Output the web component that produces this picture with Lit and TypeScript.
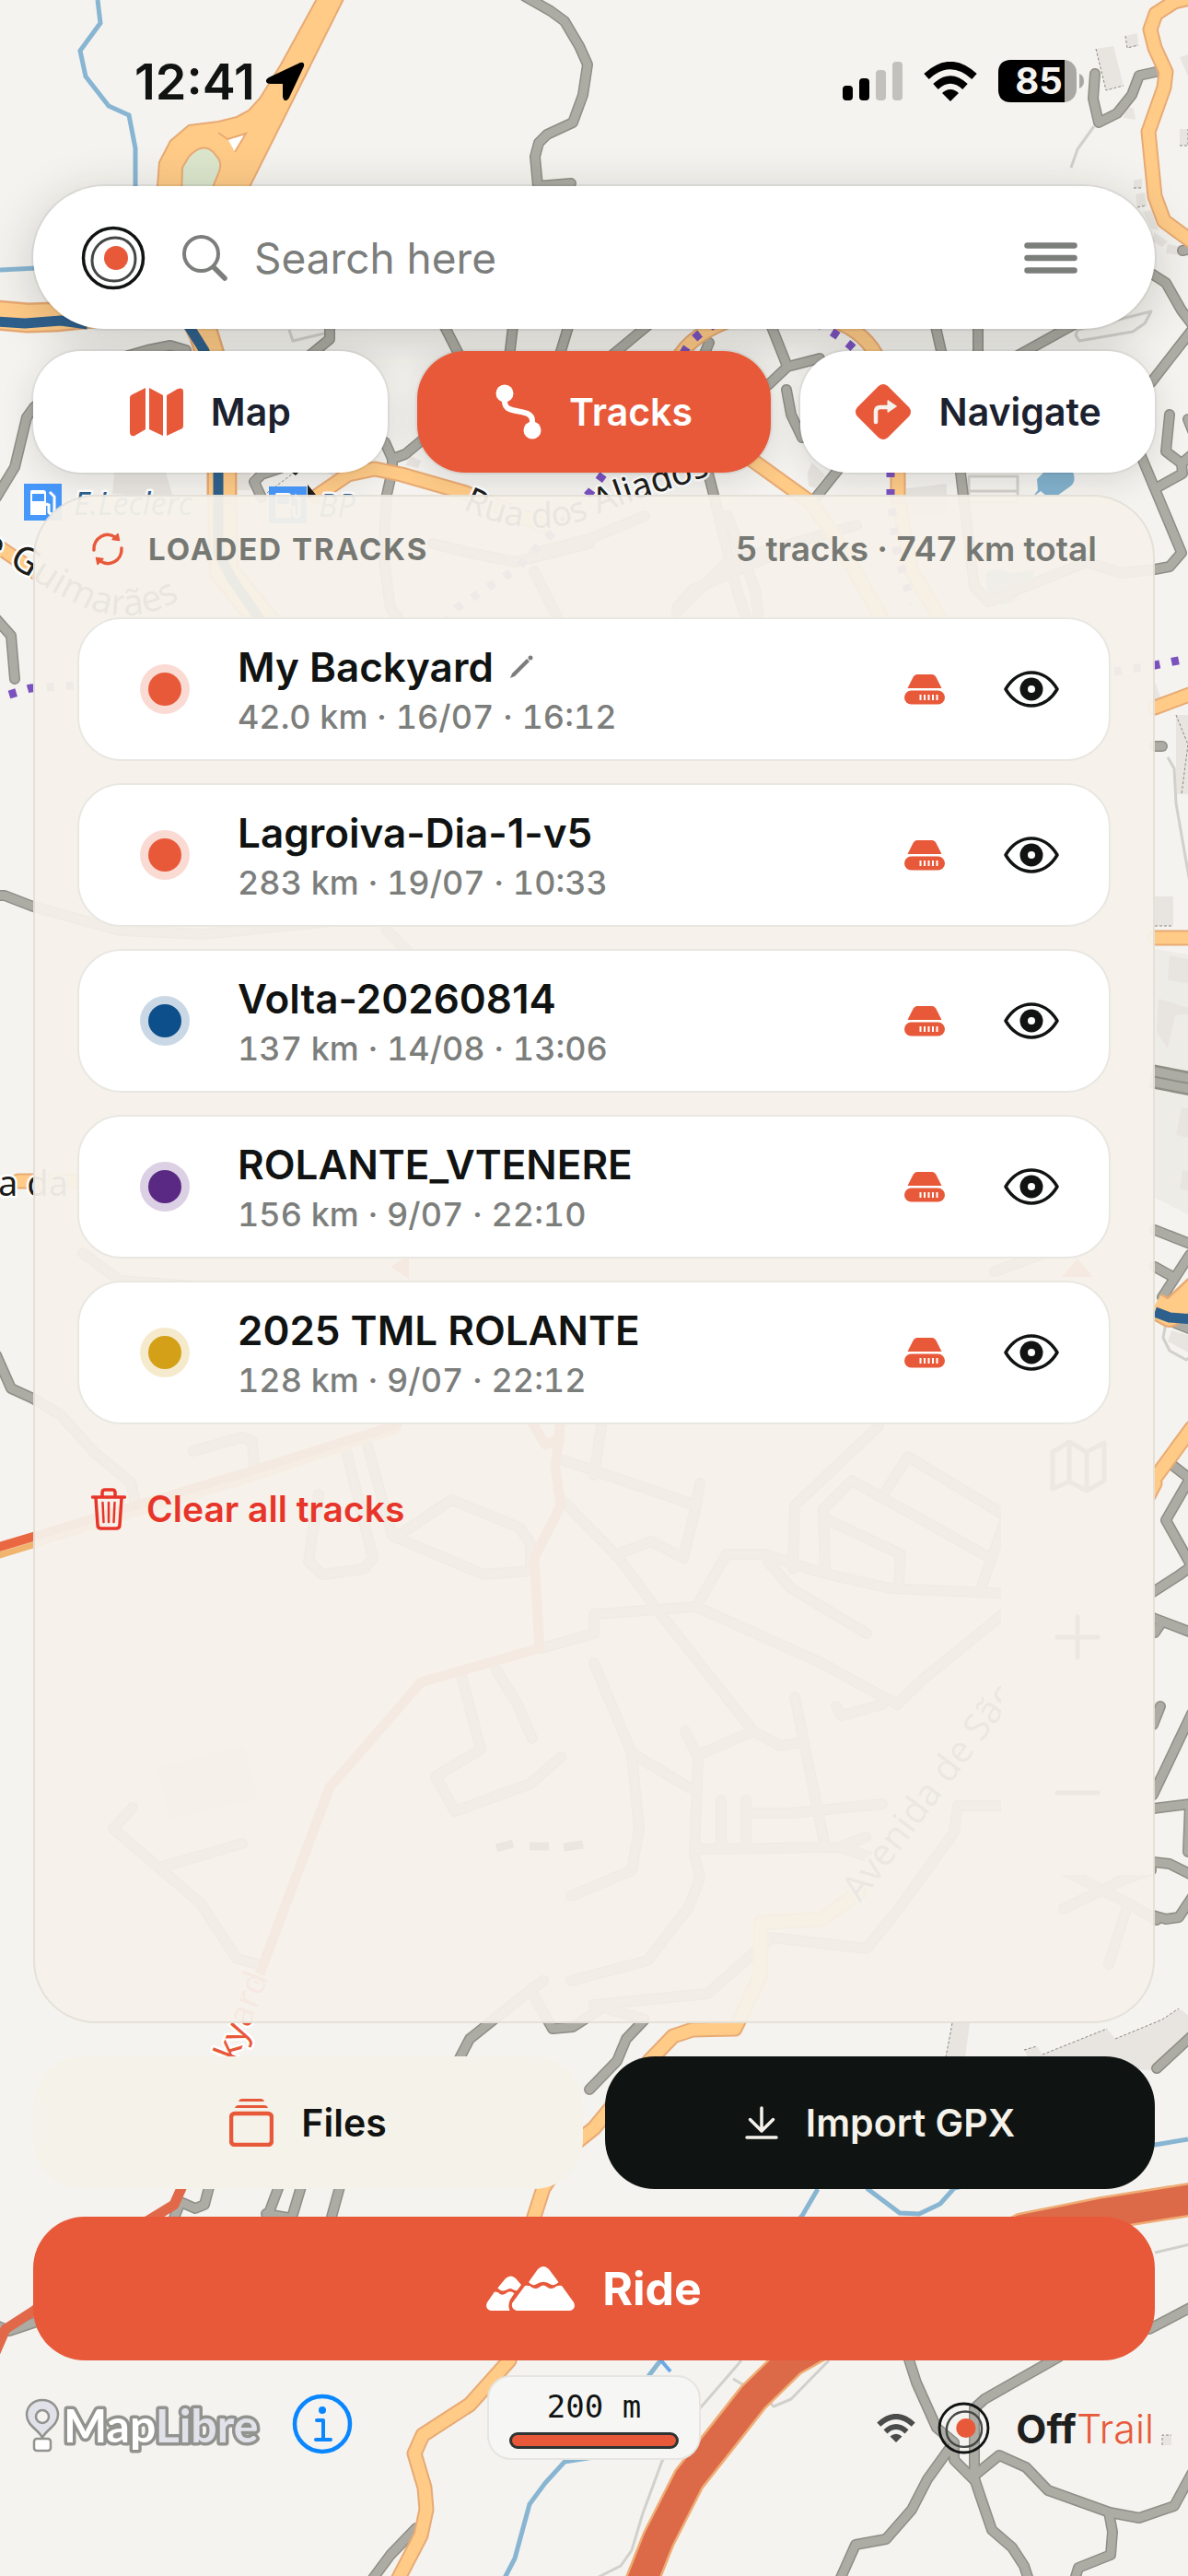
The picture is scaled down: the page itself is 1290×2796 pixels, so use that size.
import { LitElement, html, svg, css } from "lit";
import { customElement, property, state } from "lit/decorators.js";

interface Track {
  name: string;
  meta: string;
  color: string;
  editable?: boolean;
}

/* ---------- Map geometry ---------- */

const STREAMS = [
  "M106 0L109 25L87 55L93 83L118 115L140 125L147 161V210",
  "M0 293L40 291",
  "M1290 2322L1254 2328L1036 2375L1021 2392L998 2403L977 2402L941 2375",
  "M888 2376L871 2405L715 2565L705 2578L645 2667L613 2672L592 2695L575 2718L559 2777L547 2800",
];

const THIN = [
  "M1188 137L1170 162L1163 182",
  "M1268 822L1275 834L1277 872L1292 958",
  "M805 2562L793 2576L760 2614L719 2671L698 2728L686 2768L674 2785L650 2797",
  "M900 2562L859 2604L840 2612L830 2602L796 2582",
  "M1254 2445L1292 2436",
  "M1250 338L1170 358L1168 364L1172 370L1230 360L1243 351Z",
  "M1052 517H1105V545H1052Z M1052 533H1105",
  "M314 358L318 370L356 361",
  "M1266 1436L1263 1452L1270 1466L1288 1476L1296 1470",
];

const GREY = [
  "M570 -4L598 12L613 23L629 50L638 70L633 103L622 133L594 146L585 155L581 170L584 202L620 199",
  "M1189 80L1187 107L1193 133L1213 123L1229 103L1237 82L1260 77",
  "M1296 270L1284 272",
  "M1252 298L1266 307L1283 337L1296 354",
  "M1250 415L1296 356",
  "M1270 450L1266 490L1283 503L1296 492M1290 455L1296 470M1283 503L1284 514L1255 530",
  "M1237 490L1283 600L1270 615L1254 618L1217 622L1180 610L1073 653L1058 637L1042 505L1022 381L1015 350",
  "M-4 540L16 507L29 453L37 442L90 400L160 380L185 375L202 380",
  "M358 345V368L335 387",
  "M478 345L500 388M558 345L553 388M620 345L607 388",
  "M418 480L426 498L440 493L458 478M426 498V510L420 537L416 600L424 660L470 720",
  "M284 540L276 523L284 515L305 508",
  "M664 386L705 352M764 386L770 372",
  "M834 345L855 398L890 389M855 398L834 418",
  "M854 423L859 450L871 475",
  "M1062 345V390M1170 350L1105 386",
  "M910 510L886 540M768 510L775 537L800 640L820 700",
  "M735 660L752 640L845 600M790 560L820 640L825 680M735 664L790 610L930 570",
  "M580 600L640 585L700 560M470 590L510 600L560 610L640 590M580 620L610 680",
  "M-4 672L12 690L16 737",
  "M-4 972H5L36 984L130 1010L220 1014L360 1000",
  "M-4 1471L12 1507L36 1518L66 1536L103 1577L142 1609L148 1634",
  "M1254 810H1262",
  "M1254 1335L1292 1350M1254 1375L1272 1385M1262 1408L1292 1362M1276 1436L1296 1444",
  "M1274 1591L1292 1605L1266 1650L1294 1700L1280 1710L1252 1728",
  "M1252 1756L1294 1772M1254 1772L1262 1760",
  "M1260 1852L1252 1872M1294 1860L1252 1948M1252 1963L1292 1958L1290 2010",
  "M1252 2021L1270 2023L1294 2035M1252 2079L1266 2083L1280 2081L1294 2060",
  "M210 1575L263 1560L274 1565L276 1593",
  "M376 1575L405 1691L395 1703L350 1709L335 1695L346 1622",
  "M399 1569L426 1667L525 1709L576 1705",
  "M432 1667L490 1628L564 1658L576 1675V1703",
  "M612 1585L756 1634L742 1691L707 1673L670 1687M760 1610L756 1634M653 1548L645 1601",
  "M612 1630L672 1691L711 1744L818 1879L847 1895L871 1891M818 1879L758 1905",
  "M502 1822L522 1899L473 1928L494 1966L576 1936L609 1907",
  "M539 1813L562 1850L578 1887",
  "M588 1789L645 1773V1752L756 1744L789 1687L830 1687L892 1707L966 1724L1102 1730",
  "M756 1744L892 1805L974 1850L1003 1822L1089 1752",
  "M954 1548L863 1634L861 1703M896 1707L894 1638L925 1607L1075 1691",
  "M900 1650L978 1687L976 1720M962 1618L986 1581L1093 1646L1065 1724",
  "M834 1695L859 1724L941 1773M863 1842L896 2005M908 1852L914 1862L958 1850",
  "M744 1879L758 1907L754 2013L760 2038L748 2070L703 2128L620 2150",
  "M645 1805L686 1903L748 1940M686 1903L694 1985L686 2030L620 2058",
  "M783 1954V2007M810 1954V2007M756 2007L912 2005L949 2017M810 1968H859L958 1958M912 2005L940 1994",
  "M645 2176L768 2164L838 2103L941 2115L974 2074L1036 1989L1040 1960L1087 1960",
  "M144 1962L123 1985L218 2066L257 2126L280 2132M177 2026L263 2001",
  "M1204 2132L1225 2066L1155 2030M1155 2072L1220 2040L1250 2030M1225 2066L1256 2084",
  "M645 2176L700 2192L680 2213L670 2237L640 2268",
  "M590 2150L576 2160L510 2213L498 2236M576 2160L600 2202L622 2200L650 2182",
  "M1294 2210L1256 2245",
  "M228 2370L222 2393L212 2397L196 2390L188 2410",
  "M304 2370L289 2410M328 2370L316 2410M289 2403L318 2408M370 2370L359 2410",
  "M40 2520L10 2530L-4 2524",
  "M452 2744L424 2773L404 2800",
  "M986 2558L995 2586L1017 2635L1036 2651V2670L1058 2692",
  "M1150 2558L1069 2604L1058 2614V2690L1064 2708L1077 2746L1099 2765L1112 2785L1117 2800",
  "M1030 2659L1007 2691L990 2724L962 2756L929 2762L912 2800",
  "M1058 2687L1085 2665L1114 2678L1138 2703L1205 2727L1237 2733L1275 2720L1294 2685",
  "M1204 2727L1208 2748L1206 2773L1171 2787L1167 2800",
  "M1248 2528L1294 2504",
  "M90 1360L130 1390L270 1400M420 1010L470 1060M1080 1380L1190 1340",
];

const ORANGE = [
  "M1300 -4L1275 2L1255 15L1249 32L1254 52L1266 78L1264 95L1247 143L1254 213L1264 240L1294 262",
  "M343 539L378 515L407 509L436 515L506 535L590 570",
  "M738 386Q755 360 800 345",
  "M895 345Q935 355 952 386L975 440V540L990 620L1020 670",
  "M812 496L880 545L905 580L957 670",
  "M-4 592L40 622",
  "M1254 768L1294 753M1254 1018H1294",
  "M1250 1610L1294 1550M1215 1685L1254 1610",
  "M933 2054L892 2083L826 2087V2144L798 2202L752 2203L731 2210L705 2237L645 2310L620 2330L590 2375L580 2406L553 2562L510 2610L459 2643L450 2663L461 2700L463 2724L457 2752L432 2800",
  "M20 1282H85",
];

const PURPLE = [
  "M742 384Q750 365 780 350",
  "M885 350Q915 365 935 386",
  "M967 510V540L974 600L990 655",
  "M655 515L642 533L607 571L560 618L496 660L470 690",
  "M10 754L33 747L80 744",
  "M1210 729L1254 722L1294 714",
];

const BUILDINGS = [
  "M1190 53L1209 50L1220 93L1201 98Z",
  "M1222 39L1235 36L1236 50L1224 52Z",
  "M1222 115L1231 118L1233 130L1220 128ZM1281 62L1294 58V92ZM1281 140H1294V158H1281Z",
  "M1231 196L1240 194V204H1231ZM1233 211L1243 209L1245 223L1235 225ZM1241 230L1250 228L1258 250L1250 248ZM1253 252L1268 262L1262 268L1252 262ZM1268 265L1284 268L1282 277L1266 275Z",
  "M877 513L882 502L896 516L885 530L878 527Z",
  "M984 530L1028 525V560H984Z",
  "M124 513H180L188 540L122 536ZM258 513H272V532H258Z",
  "M350 510L362 517L372 509ZM440 505L446 495L457 500L454 508Z",
  "M1254 740L1262 762L1254 768ZM1277 776H1294V862H1277ZM1254 973H1274V1005H1254Z",
  "M1270 1037L1294 1042V1068L1268 1064ZM1258 1084L1294 1095V1100L1276 1102L1268 1138L1256 1120ZM1283 1202L1294 1204V1236L1277 1232ZM1284 1270L1294 1272V1294L1281 1290Z",
  "M1272 1444L1294 1450V1470L1268 1456Z",
  "M1034 2196H1053L1048 2233H1027Z",
  "M1112 2225L1126 2221L1132 2230L1202 2202L1211 2213L1262 2192L1280 2180L1294 2190V2208L1250 2247L1120 2240Z",
  "M1262 2643H1272V2654H1262Z",
  "M170 1918L265 1895L280 1952L185 1975Z",
];

const mapView = svg`
  <rect width="1290" height="2796" fill="#f4f3ef"/>
  <path d="M1254 1030L1290 1036V1318L1254 1300Z" fill="#edece7"/>
  <g fill="#e8e5e1">${BUILDINGS.map((d) => svg`<path d=${d}/>`)}</g>
  <g fill="none" stroke="#8b8984" stroke-width="1" stroke-dasharray="3 2">
    <path d="M1190 53L1201 98L1220 93M1222 39L1224 52L1236 49M1231 204H1240M1235 225L1245 223M1277 776L1290 808L1283 862M1254 1005H1274M1112 2225L1126 2221M1132 2230L1202 2202M1211 2213L1262 2192L1280 2180M1034 2196L1027 2233M1262 2654V2643H1272M1281 158H1290V140M290 535L318 514"/>
  </g>
  <g fill="none" stroke="#d1d0cb" stroke-width="3" stroke-linejoin="round">${THIN.map((d) => svg`<path d=${d}/>`)}</g>
  <g fill="none" stroke="#87b5d2" stroke-width="5">${STREAMS.map((d) => svg`<path d=${d}/>`)}</g>
  <path d="M1121 540L1127 532L1126 520L1136 510H1164Q1170 522 1162 528L1148 538H1136L1130 533Z" fill="#82b1cd"/>
  <path d="M1070 622Q1084 614 1098 622L1124 618L1118 636L1098 654Q1080 662 1072 646Z" fill="#87b5d2"/>
  <g fill="none" stroke-linejoin="round" stroke-linecap="round">
    <g stroke="#8e8e86" stroke-width="12">${GREY.map((d) => svg`<path d=${d}/>`)}</g>
    <path d="M1250 1168L1296 1177" stroke="#8e8e86" stroke-width="26" stroke-linecap="butt"/>
    <g stroke="#acaca5" stroke-width="9">${GREY.map((d) => svg`<path d=${d}/>`)}</g>
    <path d="M1250 1168L1296 1177" stroke="#acaca5" stroke-width="21" stroke-linecap="butt"/>
    <path d="M1250 1168L1296 1177" stroke="#8e8e86" stroke-width="2" stroke-linecap="butt"/>
    <g stroke="#e8aa74" stroke-width="17">${ORANGE.map((d) => svg`<path d=${d}/>`)}</g>
    <path d="M-4 342L30 345L60 344L120 338L210 340L221 362L228 385L241 513V540L243 620L300 690" stroke="#e8aa74" stroke-width="33"/>
    <path d="M1254 1417L1270 1426L1300 1398" stroke="#e8aa74" stroke-width="30" stroke-linecap="butt"/>
    <g stroke="#ffcb87" stroke-width="13">${ORANGE.map((d) => svg`<path d=${d}/>`)}</g>
    <path d="M-4 342L30 345L60 344L120 338L210 340L221 362L228 385L241 513V540L243 620L300 690" stroke="#ffcb87" stroke-width="28"/>
    <path d="M1254 1417L1270 1426L1300 1398" stroke="#ffcb87" stroke-width="25" stroke-linecap="butt"/>
    <g stroke="#2e608d" stroke-width="11" stroke-linecap="butt">
      <path d="M-4 349L27 351L66 348L95 352M190 335L207 357L222 381L234 450L237 513V600L251 627L282 672"/>
      <path d="M1254 1424L1270 1430L1296 1432"/>
    </g>
    <g stroke="#7a51bf" stroke-width="9" stroke-dasharray="8 13" stroke-linecap="butt">${PURPLE.map((d) => svg`<path d=${d}/>`)}</g>
    <path d="M-4 1689L36 1677L148 1643L271 1606L432 1552" stroke="#f0b46f" stroke-width="7"/>
    <path d="M-4 1680L36 1668L148 1634L271 1597L432 1546" stroke="#ea6841" stroke-width="10"/>
    <path d="M575 1540L592 1568L608 1562M609 1540L603 1593L609 1634L580 1691L586 1789L457 1826L358 1940L280 2148M205 2350L197 2375L189 2393L158 2412L37 2508L6 2528L-8 2560" stroke="#e2684a" stroke-width="11"/>
    <path d="M1320 2383L1200 2402L1110 2420L859 2562L818 2602L789 2639L748 2691L715 2756L696 2804" stroke="#efac74" stroke-width="37"/>
    <path d="M1320 2383L1200 2402L1110 2420L859 2562L818 2602L789 2639L748 2691L715 2756L696 2804" stroke="#dc6a49" stroke-width="32"/>
  </g>
  <path d="M345 -3L305 70L282 107L270 120L257 127L237 132L205 136L185 153L173 176L170 215H265L374 -3Z" fill="#ffcb87" stroke="#e8aa74" stroke-width="2"/>
  <path d="M197 215L198 182L205 170Q222 152 234 168Q242 176 238 186L230 206V215Z" fill="#dbe6cd" stroke="#e8aa74" stroke-width="2"/>
  <path d="M248 152L267 145L255 165Z" fill="#fff"/>
  <path d="M237 144L247 151L267 145L255 165" fill="none" stroke="#e8aa74" stroke-width="2"/>
  <path d="M539 2006L557 2001M575 2004H596M612 2005L633 2002" stroke="#333" stroke-width="9"/>
  <path d="M424 1375L444 1362V1388Z M1153 1386L1170 1366L1187 1386Z" fill="#e8593a"/>
  <path d="M334 526L343 537L334 541ZM317 513L325 512L321 516Z" fill="#1d1d1b"/>
  <g>
    <rect x="26" y="525" width="41" height="40" fill="#4798fb"/>
    <rect x="292" y="528" width="41" height="40" fill="#4798fb"/>
    ${[26, 292].map(
      (x, i) => svg`<g transform="translate(${x} ${525 + i * 3})" fill="#fff">
        <path d="M8 7H21Q24 7 24 10V34H7V10Q7 7 8 7Z"/><path d="M9 11H22V19H9Z" fill="#4798fb"/>
        <path d="M28 9L33 14V31Q30 35 27 31V23L24 22" fill="none" stroke="#fff" stroke-width="3"/></g>`
    )}
  </g>
  <g class="map-text" stroke="#fff" stroke-width="5" paint-order="stroke" stroke-linejoin="round">
    <text x="80" y="559" font-size="34" font-style="italic" fill="#2e608d">E.Leclerc</text>
    <text x="346" y="561" font-size="34" font-style="italic" fill="#2e608d">BP</text>
    <path id="aliados" d="M502 552C545 575 600 580 640 562C690 540 730 532 800 505" fill="none" stroke="none"/>
    <text font-size="38" fill="#1c1c1a"><textPath href="#aliados">Rua dos Aliados</textPath></text>
    <path id="guimaraes" d="M-22 600C14 610 40 636 80 654C125 676 165 672 206 644" fill="none" stroke="none"/>
    <text font-size="40" fill="#1c1c1a"><textPath href="#guimaraes">e Guimarães</textPath></text>
    <text x="74" y="1298" font-size="38" text-anchor="end" fill="#1c1c1a">Rua da</text>
    <text transform="translate(292 2146) rotate(-69)" font-size="38" text-anchor="end" fill="#e8593a">My Backyard</text>
    <text transform="translate(934 2066) rotate(-53)" font-size="40" fill="#444">Avenida de São</text>
  </g>
  <path d="M716 2560L728 2574" stroke="#6aa8ea" stroke-width="4"/>
  <rect x="1087" y="1520" width="166" height="515" fill="#f4f3ef"/>
  <g fill="none" stroke="#555" stroke-width="5" stroke-linejoin="round" stroke-linecap="round">
    <path d="M1143 1576L1161 1565L1180 1576L1199 1566V1607L1180 1618L1161 1608L1143 1616ZM1161 1565V1608M1180 1576V1618"/>
    <path d="M1170 1755V1799M1148 1777H1192M1148 1946H1192"/>
  </g>
`;

/* ---------- Icons ---------- */

const targetIcon = (size: number) => html`<svg class="icon" width=${size} height=${size} viewBox="0 0 70 70" aria-hidden="true">
  <circle cx="35" cy="35" r="32.5" fill="none" stroke="#101312" stroke-width="3.5"/>
  <path d="M37 13C51 13 59 24 59 36C59 50 49 60 36 60C22 60 12 51 12 38C12 24 23 13 37 13Z" fill="none" stroke="#444745" stroke-width="3"/>
  <circle cx="38" cy="35" r="13" fill="#e8593a"/>
</svg>`;

const wifiIcon = (w: number, h: number, color: string) => html`<svg class="icon" width=${w} height=${h} viewBox="0 0 58 43" aria-hidden="true">
  <path d="M3 16Q29 -8 55 16" fill="none" stroke=${color} stroke-width="8"/>
  <path d="M13 27Q29 12 45 27" fill="none" stroke=${color} stroke-width="8"/>
  <path d="M20 34Q29 26 38 34L29 43Z" fill=${color}/>
</svg>`;

const mapIcon = html`<svg class="icon" width="58" height="54" viewBox="0 0 58 54" fill="#e8593a" aria-hidden="true">
  <path d="M17 1V46L5 53Q0 54 0 49V12Q0 9 3 8ZM21 1L36 9V53L21 46ZM40 9L52 2Q58 0 58 5V42Q58 45 55 46L40 53Z"/>
</svg>`;

const routeIcon = html`<svg class="icon" width="50" height="60" viewBox="0 0 50 60" fill="#fff" aria-hidden="true">
  <circle cx="10" cy="10" r="9.5"/><circle cx="40" cy="50" r="9.5"/>
  <path d="M10 14V19C10 35 40 24 40 40V46" fill="none" stroke="#fff" stroke-width="6"/>
</svg>`;

const turnIcon = html`<svg class="icon" width="62" height="62" viewBox="0 0 62 62" aria-hidden="true">
  <path d="M26 3Q31 -1 36 3L59 26Q63 31 59 36L36 59Q31 63 26 59L3 36Q-1 31 3 26Z" fill="#e8593a"/>
  <path d="M23 42V31Q23 26 28 26H36" fill="none" stroke="#f5f2ec" stroke-width="4.5" stroke-linecap="round"/>
  <path d="M36 18.500L45.500 25L36 31.500Z" fill="#f5f2ec" stroke="#f5f2ec" stroke-linejoin="round"/>
</svg>`;

const syncIcon = html`<svg class="icon" width="36" height="36" viewBox="0 0 36 36" fill="none" stroke="#e8593a" stroke-width="3.500" stroke-linecap="round" aria-hidden="true">
  <path d="M3 19C2 6 17 -3 27 6M33 17C34 30 19 39 9 30"/>
  <path d="M29 1.500L30.500 8.500L23 7.500ZM7 34.500L5.500 27.500L13 28.500Z" fill="#e8593a" stroke-width="1.500" stroke-linejoin="round"/>
</svg>`;

const pencilIcon = html`<svg class="icon" width="28" height="28" viewBox="0 0 28 28" aria-hidden="true">
  <path d="M2 26L4 21L20 5L23 8L7 24Z" fill="#7c7e7c"/><circle cx="24" cy="4" r="2.500" fill="#7c7e7c"/>
</svg>`;

const driveIcon = html`<svg class="icon" width="44" height="33" viewBox="0 0 44 33" aria-hidden="true">
  <path d="M3.500 15L9 4Q11 0 14 0H30Q33 0 35 4L40.500 15Z" fill="#e8593a"/>
  <rect y="17.500" width="44" height="15" rx="7.500" fill="#e8593a"/>
  <path d="M17.500 22V28M22 22V28M26.500 22V28M31 22V28M35.500 22V28" stroke="#fff" stroke-width="2"/>
</svg>`;

const eyeIcon = (open: boolean) => html`<svg class="icon" width="60" height="40" viewBox="0 0 60 40" aria-hidden="true">
  <path d="M2 20C16 -4 44 -4 58 20C44 44 16 44 2 20Z" fill="none" stroke="#101312" stroke-width="3.500" stroke-linejoin="round"/>
  ${open ? svg`<circle cx="30" cy="20" r="12.500" fill="#101312"/><circle cx="30" cy="20" r="4" fill="#fff"/>` : ""}
</svg>`;

const trashIcon = html`<svg class="icon" width="38" height="46" viewBox="0 0 38 46" fill="none" stroke="#e8352a" stroke-linecap="round" stroke-linejoin="round" aria-hidden="true">
  <path d="M1.500 10H36.500M12 9V5Q12 2 15 2H23Q26 2 26 5V9M5 11L7 40Q7 44 11 44H27Q31 44 31 40L33 11" stroke-width="3.500"/>
  <path d="M12.500 16L13.500 37M19 16V37M25.500 16L24.500 37" stroke-width="2.500"/>
</svg>`;

const filesIcon = html`<svg class="icon" width="48" height="52" viewBox="0 0 48 52" aria-hidden="true">
  <rect x="2" y="16" width="44" height="34" rx="4" fill="none" stroke="#e8593a" stroke-width="4.500"/>
  <path d="M6 10Q7 7 10 7H38Q41 7 42 10ZM10 3Q11 0 14 0H34Q37 0 38 3Z" fill="#e8593a"/>
</svg>`;

const downloadIcon = html`<svg class="icon" width="36" height="36" viewBox="0 0 36 36" fill="none" stroke="#f5f2ec" stroke-width="3.500" stroke-linecap="round" stroke-linejoin="round" aria-hidden="true">
  <path d="M18 2V26M5.500 14.500L18 27L30.500 14.500M2 34H34"/>
</svg>`;

const peaksIcon = html`<svg class="icon" width="96" height="48" viewBox="0 0 96 48" fill="#fff" aria-hidden="true">
  <path d="M46 17L56 3Q62 -3 68 3L78.500 17Q74 22 70 19.500Q62 14 54 19.500Q50 22 46 17Z"/>
  <path d="M42 21Q47 20 50 23Q54 25 57 23Q62 18 67 23Q70 25 74 23Q77 20 82 21L95 39Q98 46 91 48H33Q27 46 28 40Z"/>
  <path d="M12.300 23.500L21 13Q26.700 8 32 13L38 20L33.500 26Q31 26.500 29 25Q26 23 23 25Q17 28.500 12.300 23.500Z"/>
  <path d="M9 27.600Q13 27.500 15 30Q18 31.500 21 29.500Q26 25 30.400 29.200L26 36Q23 42 25.500 48H5Q-2 46 1 39Z"/>
</svg>`;

const FONT = css`Inter, "Noto Sans", "Liberation Sans", sans-serif`;

@customElement("track-row")
export class TrackRow extends LitElement {
  @property({ attribute: false }) track!: Track;
  @state() private shown = true;

  static styles = css`
    :host {
      display: flex;
      align-items: center;
      box-sizing: border-box;
      height: 156px;
      padding: 0 34px 0 66px;
      background: #fff;
      border: 2px solid #e9e7e2;
      border-radius: 48px;
      font-family: ${FONT};
    }
    .icon { display: block; flex: none; }
    .dot { width: 54px; height: 54px; flex: none; margin-right: 52px; }
    .body { flex: 1; min-width: 0; padding-top: 4px; }
    .name {
      display: flex;
      align-items: center;
      gap: 16px;
      margin: 0;
      font-size: 44px;
      line-height: 56px;
      font-weight: 600;
      color: #101312;
    }
    .meta {
      margin: 0;
      font-size: 36px;
      line-height: 52px;
      font-weight: 500;
      font-variant-numeric: tabular-nums;
      color: #7c7e7c;
    }
    button {
      display: grid;
      place-items: center;
      padding: 0;
      border: 0;
      background: none;
      cursor: pointer;
    }
    .edit { width: 28px; height: 28px; }
    .eye { width: 100px; height: 100px; margin-left: 44px; }
  `;

  render() {
    const t = this.track;
    return html`
      <svg class="dot" viewBox="0 0 54 54" aria-hidden="true">
        <circle cx="27" cy="27" r="27" fill=${t.color} opacity=".22"/>
        <circle cx="27" cy="27" r="18" fill=${t.color}/>
      </svg>
      <div class="body">
        <h2 class="name">${t.name}${t.editable ? html`<button class="edit" aria-label="Rename track">${pencilIcon}</button>` : ""}</h2>
        <p class="meta">${t.meta}</p>
      </div>
      ${driveIcon}
      <button class="eye" aria-label="Toggle visibility" aria-pressed=${this.shown} @click=${() => (this.shown = !this.shown)}>${eyeIcon(this.shown)}</button>
    `;
  }
}

@customElement("app-root")
export class AppRoot extends LitElement {
  @state() private tab = "Tracks";

  private tracks: Track[] = [
    { name: "My Backyard", meta: "42.0 km · 16/07 · 16:12", color: "#e8593a", editable: true },
    { name: "Lagroiva-Dia-1-v5", meta: "283 km · 19/07 · 10:33", color: "#e8593a" },
    { name: "Volta-20260814", meta: "137 km · 14/08 · 13:06", color: "#0c4f8a" },
    { name: "ROLANTE_VTENERE", meta: "156 km · 9/07 · 22:10", color: "#5a2983" },
    { name: "2025 TML ROLANTE", meta: "128 km · 9/07 · 22:12", color: "#d3a017" },
  ];

  static styles = css`
    :host {
      display: block;
      position: relative;
      overflow: hidden;
      background: #f4f3ef;
      font-family: ${FONT};
      color: #101312;
    }
    * { box-sizing: border-box; }
    .icon { display: block; flex: none; }
    .map { position: absolute; inset: 0; width: 100%; height: 100%; }
    .map-text { font-family: "Noto Sans", sans-serif; }
    .screen {
      position: relative;
      display: flex;
      flex-direction: column;
      min-height: 100vh;
      padding: 0 36px 126px;
    }
    button { font: inherit; color: inherit; border: 0; padding: 0; cursor: pointer; }

    .status {
      display: flex;
      align-items: center;
      height: 176px;
      margin-bottom: 26px;
      padding: 0 76px 0 110px;
    }
    .time { font-size: 54px; font-weight: 600; }
    .arrow { margin-left: 12px; }
    .signals { display: flex; align-items: center; gap: 23px; margin-left: auto; }
    .battery {
      position: relative;
      display: grid;
      place-items: center;
      width: 94px;
      height: 46px;
    }
    .battery svg { position: absolute; inset: 0; }
    .battery span { position: relative; padding-right: 6px; font-size: 40px; line-height: 46px; font-weight: 700; color: #f4f3ef; }

    .search {
      display: flex;
      align-items: center;
      height: 155px;
      padding: 0 68px 0 52px;
      background: #fff;
      border-radius: 78px;
      box-shadow: 0 0 0 2px rgba(0, 0, 0, .06), 0 12px 56px rgba(30, 30, 20, .2);
    }
    .search label { display: flex; align-items: center; flex: 1; gap: 28px; margin-left: 40px; }
    .search input {
      flex: 1;
      min-width: 0;
      padding: 0;
      border: 0;
      outline: 0;
      background: none;
      font: inherit;
      font-size: 46px;
      color: #101312;
    }
    .search input::placeholder { color: #7c7e7c; opacity: 1; }
    .menu { background: none; padding: 16px; }

    .tabs { display: grid; grid-template-columns: repeat(3, 1fr); gap: 32px; margin: 24px 0; }
    .tab {
      display: flex;
      align-items: center;
      justify-content: center;
      gap: 30px;
      height: 132px;
      border-radius: 52px;
      background: #fff;
      box-shadow: 0 0 0 2px rgba(0, 0, 0, .05), 0 8px 36px rgba(30, 30, 20, .13);
      font-size: 41px;
      font-weight: 600;
      color: #1b212e;
    }
    .tab.on { background: #e8593a; color: #fff; }

    .panel {
      flex: 1;
      padding: 0 46px 48px;
      border: 2px solid rgba(80, 80, 60, .1);
      border-radius: 68px;
      background: rgba(245, 241, 234, .95);
      margin-bottom: 36px;
    }
    .panel-head {
      display: flex;
      align-items: center;
      height: 131px;
      padding: 0 15px 18px;
      color: #767873;
    }
    .panel-head h1 {
      flex: 1;
      margin: 0 0 0 26px;
      font-size: 33px;
      font-weight: 700;
      letter-spacing: 2px;
      text-transform: uppercase;
    }
    .panel-head p { margin: 0; font-size: 37px; font-weight: 600; }
    .list { display: flex; flex-direction: column; gap: 24px; margin: 0; padding: 0; list-style: none; }
    .clear {
      display: flex;
      align-items: center;
      gap: 22px;
      margin-top: 56px;
      padding: 12px 15px;
      background: none;
      font-size: 39px;
      line-height: 48px;
      font-weight: 600;
      color: #e8352a;
    }

    .actions { display: grid; grid-template-columns: 1fr 1fr; gap: 24px; margin-bottom: 30px; }
    .action {
      display: flex;
      align-items: center;
      justify-content: center;
      gap: 30px;
      height: 144px;
      border-radius: 54px;
      background: #f5f2ea;
      font-size: 41px;
      font-weight: 600;
    }
    .action.dark { background: #0f1413; color: #f5f2ea; }
    .ride {
      display: flex;
      align-items: center;
      justify-content: center;
      gap: 30px;
      height: 156px;
      border-radius: 56px;
      background: #e8593a;
      color: #fff;
      font-size: 50px;
      font-weight: 700;
    }

    .foot {
      display: grid;
      grid-template-columns: 1fr auto 1fr;
      align-items: end;
      margin: 16px -9px 0;
    }
    .credits, .brand { display: flex; align-items: center; padding-bottom: 6px; }
    .libre { display: flex; align-items: center; text-decoration: none; }
    .libre text { font-family: Lato, sans-serif; font-weight: 700; font-size: 50px; }
    .info { margin-left: 30px; background: none; }
    .scale {
      display: flex;
      flex-direction: column;
      align-items: center;
      gap: 8px;
      width: 232px;
      height: 92px;
      padding-top: 12px;
      border: 2px solid #e6e5e1;
      border-radius: 26px;
      background: #f6f6f4;
      font-family: "DejaVu Sans Mono", "Liberation Mono", monospace;
      font-size: 34px;
      line-height: 40px;
    }
    .scale i { width: 184px; height: 18px; border: 3px solid #2e3432; border-radius: 9px; background: #e8593a; }
    .brand { justify-content: flex-end; padding-right: 10px; font-size: 43px; line-height: 52px; color: #1e2020; }
    .brand b { margin-left: 28px; font-weight: 700; }
    .brand span { font-weight: 300; color: #e8593a; }
    .brand .icon + .icon { margin-left: 24px; }
  `;

  render() {
    const tabs = [
      { label: "Map", icon: mapIcon },
      { label: "Tracks", icon: routeIcon },
      { label: "Navigate", icon: turnIcon },
    ];
    return html`
      <svg class="map" viewBox="0 0 1290 2796" preserveAspectRatio="xMidYMid slice" aria-hidden="true">${mapView}</svg>
      <div class="screen">
        <header class="status">
          <span class="time">12:41</span>
          <svg class="icon arrow" width="42" height="42" viewBox="0 0 42 42" aria-hidden="true">
            <path d="M3 17Q-2 20 1 23Q2 24 5 24H18V38Q19 43 22 42Q24 41 25 39L41 5Q42 0 37 1Z"/>
          </svg>
          <div class="signals">
            <svg class="icon" width="65" height="42" viewBox="0 0 65 42" aria-hidden="true">
              <rect y="26" width="11" height="16" rx="4"/><rect x="18" y="18" width="11" height="24" rx="4"/>
              <g fill="#c2c1bd"><rect x="36" y="9" width="11" height="33" rx="4"/><rect x="54" width="11" height="42" rx="4"/></g>
            </svg>
            ${wifiIcon(58, 43, "#000")}
            <div class="battery">
              <svg width="94" height="46" viewBox="0 0 94 46" aria-hidden="true">
                <rect width="85" height="46" rx="14" fill="#a9a8a5"/>
                <path d="M14 0H72V46H14Q0 46 0 32V14Q0 0 14 0Z"/>
                <path d="M88 15Q93 17 93 23Q93 29 88 31Z" fill="#a9a8a5"/>
              </svg>
              <span>85</span>
            </div>
          </div>
        </header>

        <div class="search">
          ${targetIcon(70)}
          <label>
            <svg class="icon" width="50" height="50" viewBox="0 0 50 50" fill="none" stroke="#7c7e7c" stroke-linecap="round" aria-label="Search">
              <circle cx="20.500" cy="20.500" r="18.500" stroke-width="4"/><path d="M34 35L46 47" stroke-width="5.500"/>
            </svg>
            <input type="search" placeholder="Search here" />
          </label>
          <button class="menu" aria-label="Menu">
            <svg class="icon" width="58" height="34" viewBox="0 0 58 34" stroke="#7c7e7c" stroke-width="6.500" stroke-linecap="round" aria-hidden="true">
              <path d="M3.500 3.500H54.500M3.500 17H54.500M3.500 30.500H54.500"/>
            </svg>
          </button>
        </div>

        <nav class="tabs">
          ${tabs.map(
            (t) => html`<button class="tab ${t.label === this.tab ? "on" : ""}" @click=${() => (this.tab = t.label)}>${t.icon}${t.label}</button>`
          )}
        </nav>

        <main class="panel">
          <div class="panel-head">
            ${syncIcon}
            <h1>Loaded tracks</h1>
            <p>5 tracks · 747 km total</p>
          </div>
          <ul class="list">
            ${this.tracks.map((t) => html`<li><track-row .track=${t}></track-row></li>`)}
          </ul>
          <button class="clear">${trashIcon}Clear all tracks</button>
        </main>

        <div class="actions">
          <button class="action">${filesIcon}Files</button>
          <button class="action dark">${downloadIcon}Import GPX</button>
        </div>
        <button class="ride">${peaksIcon}Ride</button>

        <footer class="foot">
          <div class="credits">
            <a class="libre" href="#maplibre">
              <svg class="icon" width="260" height="66" viewBox="0 -5 260 66">
                <g stroke="#92938e" stroke-width="2.500" stroke-linejoin="round">
                  <path d="M19 43C15 34 2 30 2 18C2 9 9 2 19 2C29 2 36 9 36 18C36 30 23 34 19 43Z" fill="#e0e1e9"/>
                  <circle cx="19" cy="20" r="7" fill="#f4f3ef"/>
                  <rect x="10" y="44" width="18" height="13" rx="3" fill="#fff"/>
                </g>
                <text x="42" y="48" stroke="#92938e" stroke-width="7" stroke-linejoin="round" paint-order="stroke" fill="#fff">Map<tspan fill="#e0e1e9">Libre</tspan></text>
              </svg>
            </a>
            <button class="info" aria-label="Map information">
              <svg class="icon" width="66" height="66" viewBox="0 0 66 66" fill="none" stroke="#0a86ff" stroke-width="4.500" aria-hidden="true">
                <circle cx="33" cy="33" r="30"/><circle cx="33" cy="18" r="4" fill="#0a86ff" stroke="none"/>
                <path d="M27 29H34V50M26 50H42" stroke-width="4" stroke-linecap="round" stroke-linejoin="round"/>
              </svg>
            </button>
          </div>
          <div class="scale"><span>200 m</span><i></i></div>
          <div class="brand">${wifiIcon(42, 31, "#4a4c4b")}${targetIcon(57)}<b>Off</b><span>Trail</span></div>
        </footer>
      </div>
    `;
  }
}
